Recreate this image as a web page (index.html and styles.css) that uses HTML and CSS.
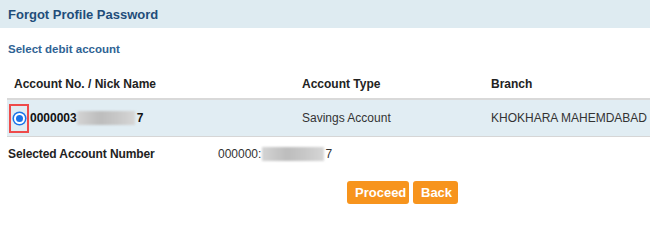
FILE: index.html
```html
<!DOCTYPE html>
<html>
<head>
<meta charset="utf-8">
<link rel="stylesheet" href="styles.css">
</head>
<body>
<div class="page">
  <div class="titlebar"><h1 class="title">Forgot Profile Password</h1></div>
  <div class="subtitle">Select debit account</div>
  <table class="acct-table">
    <thead>
      <tr>
        <th class="c1">Account No. / Nick Name</th>
        <th class="c2">Account Type</th>
        <th class="c3">Branch</th>
      </tr>
    </thead>
    <tbody>
      <tr class="acct-row">
        <td class="c1 first-cell"><span class="radio-box"><span class="radio"></span></span><span class="acct-num">0000003<span class="blur blur-a"></span>7</span></td>
        <td>Savings Account</td>
        <td>KHOKHARA MAHEMDABAD</td>
      </tr>
    </tbody>
  </table>
  <div class="selected">
    <span class="sel-label">Selected Account Number</span>
    <span class="sel-value">000000:<span class="blur blur-b"></span>7</span>
  </div>
  <div class="actions">
    <button class="btn btn-proceed">Proceed</button>
    <button class="btn btn-back">Back</button>
  </div>
</div>
</body>
</html>
```
FILE: styles.css
```css
html, body { margin: 0; padding: 0; background: #fff; }
body { font-family: "Liberation Sans", Arial, sans-serif; color: #333; width: 650px; height: 207px; overflow: hidden; }
.page { display: flex; flex-direction: column; }
.titlebar { background: #deebf1; height: 28px; display: flex; align-items: center; padding-left: 8px; }
.title { margin: 0; font-size: 13px; font-weight: bold; color: #1f4d7a; }
.subtitle { font-size: 11.5px; font-weight: bold; color: #2f6394; padding: 14px 0 0 8px; height: 14px; line-height: 14px; }
.acct-table { margin: 14px 0 0 7px; width: 643px; border-collapse: collapse; font-size: 12px; }
.acct-table th { text-align: left; font-weight: bold; color: #222; padding: 0 0 0 7px; height: 28px; vertical-align: middle; }
.acct-table .c1 { width: 281px; }
.acct-table .c2 { width: 182px; }
.acct-row { background: #e1edf3; border-top: 2px solid #d9d9d9; border-bottom: 1px solid #d6d6d6; }
.acct-row td { height: 36px; padding: 0 0 0 7px; vertical-align: middle; color: #333; }
.acct-row td.first-cell { padding-left: 2px; }
.first-cell { display: flex; align-items: center; }
.radio-box { display: inline-flex; align-items: center; justify-content: center; width: 16px; height: 25px; border: 2px solid #ee4b4b; }
.radio { width: 7px; height: 7px; border-radius: 50%; background: #1a73e8; box-shadow: 0 0 0 2px #fff, 0 0 0 3.5px #1a73e8; }
.acct-num { font-weight: bold; color: #111; display: inline-flex; align-items: center; margin-left: 1px; }
.blur { display: inline-block; height: 14px; background: linear-gradient(90deg, #d4d4d4, #bdbdbd 40%, #c8c8c8 70%, #d6d6d6); filter: blur(1px); }
.blur-a { width: 58px; margin: 0 2px 0 0; }
.blur-b { width: 62px; margin: 0 1px; }
.selected { display: flex; font-size: 12px; padding: 9px 0 0 8px; height: 16px; align-items: center; }
.sel-label { font-weight: bold; color: #222; width: 210px; letter-spacing: -0.1px; }
.sel-value { display: inline-flex; align-items: center; color: #333; }
.actions { display: flex; gap: 4px; padding: 19px 0 0 347px; }
.btn { font-family: "Liberation Sans", Arial, sans-serif; font-size: 13px; font-weight: bold; color: #fff; background: #f7941d; border: none; border-radius: 3px; height: 23px; padding: 0 8px; }
.btn-proceed { width: 62px; }
.btn-back { width: 45px; }
```
